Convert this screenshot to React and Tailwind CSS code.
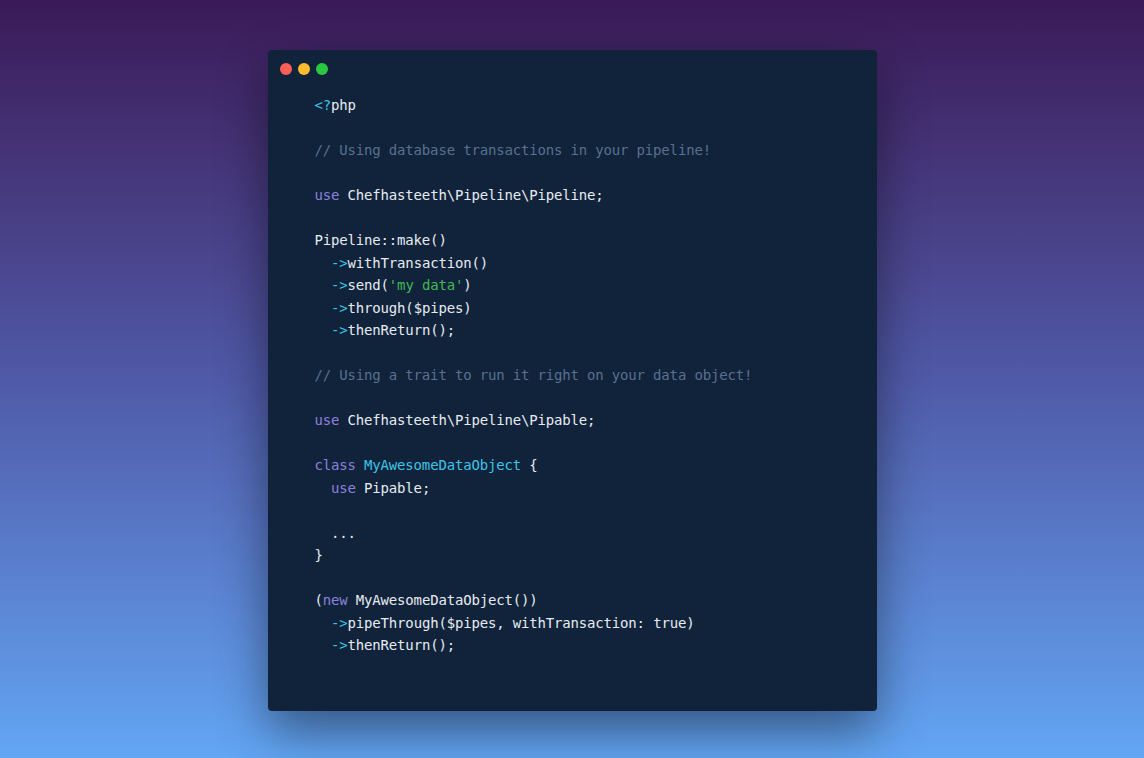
import React from "react";

const K = ({ children }) => <span className="text-[#8b80dd]">{children}</span>;
const C = ({ children }) => <span className="text-[#3cc4e6]">{children}</span>;
const S = ({ children }) => <span className="text-[#3fba52]">{children}</span>;
const Cm = ({ children }) => <span className="text-[#58708f]">{children}</span>;

const lines = [
  <><C>&lt;?</C>php</>,
  null,
  <Cm>// Using database transactions in your pipeline!</Cm>,
  null,
  <><K>use</K> Chefhasteeth\Pipeline\Pipeline;</>,
  null,
  <>Pipeline::make()</>,
  <>  <C>-&gt;</C>withTransaction()</>,
  <>  <C>-&gt;</C>send(<S>'my data'</S>)</>,
  <>  <C>-&gt;</C>through($pipes)</>,
  <>  <C>-&gt;</C>thenReturn();</>,
  null,
  <Cm>// Using a trait to run it right on your data object!</Cm>,
  null,
  <><K>use</K> Chefhasteeth\Pipeline\Pipable;</>,
  null,
  <><K>class</K> <C>MyAwesomeDataObject</C> {"{"}</>,
  <>  <K>use</K> Pipable;</>,
  null,
  <>  ...</>,
  <>{"}"}</>,
  null,
  <>(<K>new</K> MyAwesomeDataObject())</>,
  <>  <C>-&gt;</C>pipeThrough($pipes, withTransaction: true)</>,
  <>  <C>-&gt;</C>thenReturn();</>,
];

export default function App() {
  return (
    <div className="w-[1144px] h-[758px] bg-gradient-to-b from-[#3a1a58] via-[#4f5aa8] to-[#62a6f4] flex items-start justify-center pt-[50px]">
      <div className="w-[609px] h-[661px] bg-[#11233a] rounded-[4px] shadow-[0_20px_50px_rgba(0,0,0,0.45)] px-[12px] pt-[13px]">
        <div className="flex items-center gap-[6px]">
          <span className="w-[12px] h-[12px] rounded-full bg-[#ff5f57]" />
          <span className="w-[12px] h-[12px] rounded-full bg-[#febc2e]" />
          <span className="w-[12px] h-[12px] rounded-full bg-[#28c840]" />
        </div>
        <pre className="mt-[19px] pl-[35px] text-[#e6ebf2] text-[14px] tracking-[-0.17px] leading-[22.5px] font-['DejaVu_Sans_Mono',monospace]">
          {lines.map((l, i) => (
            <div key={i} className="h-[22.5px]">{l ?? " "}</div>
          ))}
        </pre>
      </div>
    </div>
  );
}
